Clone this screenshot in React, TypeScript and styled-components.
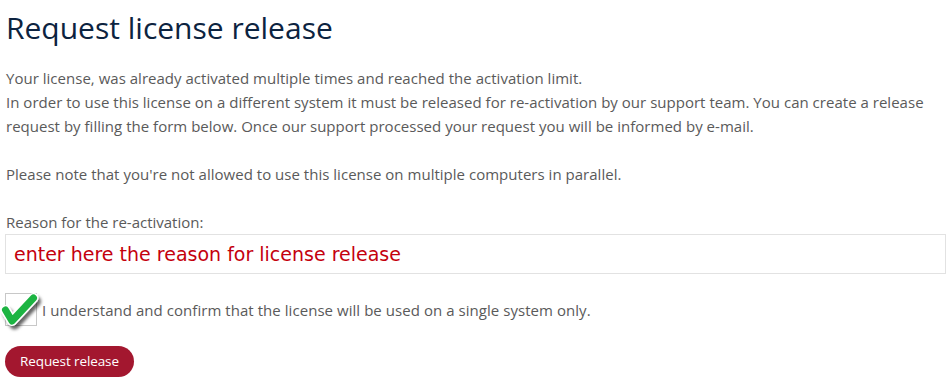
import * as React from "react";
import styled, { createGlobalStyle } from "styled-components";

const GlobalStyle = createGlobalStyle`
    html, body {
        margin: 0;
        padding: 0;
        background: #ffffff;
    }
    body {
        font-family: "Open Sans", "Noto Sans", Arial, sans-serif;
    }
`

const Page = styled.div`
    padding: 6px 6px 0 5px;
    width: 951px;
    box-sizing: border-box;
`

const Title = styled.h1`
    margin: 0 0 0 1px;
    font-weight: 400;
    font-size: 30px;
    line-height: 44px;
    color: #0c2340;
`

const Text = styled.p`
    margin: 16px 0 0 1px;
    font-size: 15px;
    line-height: 24px;
    color: #5a5a5a;
    letter-spacing: 0.02px;
`

const Label = styled.label`
    display: block;
    margin: 26px 0 2px 1px;
    font-size: 15px;
    line-height: 20px;
    color: #5a5a5a;
`

const ReasonInput = styled.input`
    display: block;
    width: 941px;
    height: 40px;
    box-sizing: border-box;
    border: 1px solid #e2e2e2;
    padding: 0 8px;
    font-family: "DejaVu Sans", Verdana, sans-serif;
    font-size: 19px;
    outline: none;

    &::placeholder {
        color: #c4000d;
        opacity: 1;
    }
`

const ConfirmRow = styled.div`
    display: flex;
    align-items: center;
    gap: 5px;
    margin-top: 19px;
`

const CheckWrap = styled.span`
    position: relative;
    width: 32px;
    height: 33px;
    flex: none;
`

const CheckBox = styled.span`
    display: block;
    width: 30px;
    height: 31px;
    border: 1px solid #c8c8c8;
    background: #fff;
`

const CheckMark = styled.svg`
    position: absolute;
    left: -4px;
    top: 0;
    width: 40px;
    height: 40px;
    overflow: visible;
`

const ConfirmText = styled.span`
    font-size: 15px;
    color: #5a5a5a;
    letter-spacing: 0.05px;
`

const SubmitButton = styled.button`
    display: block;
    margin-top: 20px;
    height: 31px;
    width: 129px;
    border: none;
    border-radius: 16px;
    background: #a3172f;
    color: #ffffff;
    font-family: "Open Sans", "Noto Sans", Arial, sans-serif;
    font-size: 13.5px;
    letter-spacing: -0.1px;
    padding: 0 0 2px;
    cursor: pointer;
`

const App = () => {
    return (
        <Page>
            <GlobalStyle/>
            <Title>Request license release</Title>
            <Text>
                Your license, was already activated multiple times and reached the activation limit.
                <br/>
                In order to use this license on a different system it must be released for re-activation by our support team. You can create a release request by filling the form below. Once our support processed your request you will be informed by e-mail.
                <br/>
                <br/>
                Please note that you're not allowed to use this license on multiple computers in parallel.
            </Text>
            <Label htmlFor="reason">Reason for the re-activation:</Label>
            <ReasonInput id="reason" placeholder="enter here the reason for license release"/>
            <ConfirmRow>
                <CheckWrap>
                    <CheckBox/>
                    <CheckMark viewBox="0 0 40 40">
                        <defs>
                            <filter id="shadow" x="-30%" y="-30%" width="180%" height="180%">
                                <feDropShadow dx="2.5" dy="3.5" stdDeviation="1.8" floodColor="#000" floodOpacity="0.6"/>
                            </filter>
                        </defs>
                        <g filter="url(#shadow)" fill="none" strokeLinecap="round" strokeLinejoin="round">
                            <polyline points="4.5,17 11,28 32.5,5" stroke="#ffffff" strokeWidth="10"/>
                            <polyline points="4.5,17 11,28 32.5,5" stroke="#1db443" strokeWidth="7"/>
                        </g>
                    </CheckMark>
                </CheckWrap>
                <ConfirmText>I understand and confirm that the license will be used on a single system only.</ConfirmText>
            </ConfirmRow>
            <SubmitButton type="button">Request release</SubmitButton>
        </Page>
    )
}

export default App
